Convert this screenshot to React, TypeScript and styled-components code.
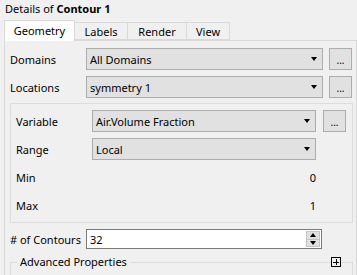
import React from "react";
import styled, { createGlobalStyle } from "styled-components";

const Global = createGlobalStyle`
  html, body { margin: 0; padding: 0; background: #f0f0f0; }
  body {
    font-family: "Noto Sans", "Liberation Sans", sans-serif;
    font-size: 11px;
    color: #000;
  }
  * { box-sizing: border-box; }
`;

const Page = styled.div`
  width: 357px;
  height: 275px;
  overflow: hidden;
  display: flex;
  flex-direction: column;
  & > * { flex-shrink: 0; }
`;

const Title = styled.div`
  height: 20px;
  padding-left: 5px;
  padding-bottom: 4px;
  display: flex;
  align-items: center;
  b { font-weight: 700; }
`;

const TabBar = styled.div`
  display: flex;
  align-items: flex-end;
  height: 20px;
  margin-left: 4px;
  position: relative;
  z-index: 1;
`;

const Tab = styled.div<{ $active?: boolean; $w: number }>`
  width: ${(p) => p.$w}px;
  height: ${(p) => (p.$active ? 21 : 18)}px;
  margin-bottom: ${(p) => (p.$active ? -1 : 0)}px;
  background: ${(p) => (p.$active ? "#ffffff" : "#f0f0f0")};
  border: 1px solid #d9d9d9;
  border-bottom: ${(p) => (p.$active ? "none" : "1px solid #d9d9d9")};
  border-left: ${(p) => (p.$active ? "1px solid #d9d9d9" : "none")};
  display: flex;
  align-items: center;
  justify-content: center;
  padding-bottom: ${(p) => (p.$active ? 1 : 0)}px;
`;

const Panel = styled.div`
  margin-left: 4px;
  width: 353px;
  flex: 1 1 0 !important;
  min-height: 0;
  overflow: hidden;
  border: 1px solid #d9d9d9;
  border-bottom: none;
  padding: 7px 3px 0 5px;
  display: flex;
  flex-direction: column;
  & > * { flex-shrink: 0; }
`;

const Row = styled.div<{ $mb?: number; $h?: number }>`
  display: flex;
  align-items: center;
  flex-shrink: 0;
  height: ${(p) => p.$h ?? 22}px;
  margin-bottom: ${(p) => p.$mb ?? 6}px;
`;

const Label = styled.div<{ $w?: number }>`
  width: ${(p) => p.$w ?? 76}px;
  flex-shrink: 0;
`;

const Select = styled.div<{ $w: number }>`
  width: ${(p) => p.$w}px;
  height: 22px;
  background: #e1e1e1;
  border: 1px solid #adadad;
  display: flex;
  align-items: center;
  justify-content: space-between;
  padding: 0 5px 0 3px;
  flex-shrink: 0;
`;

const Arrow = styled.span`
  width: 0;
  height: 0;
  border-left: 3.5px solid transparent;
  border-right: 3.5px solid transparent;
  border-top: 4px solid #000;
`;

const DotsButton = styled.div<{ $ml: number }>`
  width: 23px;
  height: 22px;
  margin-left: ${(p) => p.$ml}px;
  background: #e1e1e1;
  border: 1px solid #adadad;
  display: flex;
  align-items: flex-end;
  justify-content: center;
  padding-bottom: 4px;
  line-height: 1;
  font-size: 10px;
  flex-shrink: 0;
`;

const Group = styled.div`
  border: 1px solid #dcdcdc;
  height: 120px;
  width: 343px;
  padding: 6px 0 0 5px;
  display: flex;
  flex-direction: column;
  margin-bottom: 6px;
  & > * { flex-shrink: 0; }
`;

const Value = styled.div<{ $w: number }>`
  width: ${(p) => p.$w}px;
  text-align: right;
  padding-right: 0;
`;

const NumberInput = styled.div`
  width: 236px;
  height: 20px;
  background: #fff;
  border: 1px solid #7a7a7a;
  display: flex;
  align-items: center;
  justify-content: space-between;
  padding: 0 1px 0 3px;
`;

const Spinner = styled.div`
  display: flex;
  flex-direction: column;
  width: 14px;
  height: 16px;
`;

const SpinBtn = styled.div<{ $up?: boolean }>`
  flex: 1;
  background: #e1e1e1;
  border: 1px solid #c4c4c4;
  border-top: ${(p) => (p.$up ? "1px solid #c4c4c4" : "none")};
  display: flex;
  align-items: center;
  justify-content: center;
  &::after {
    content: "";
    width: 0;
    height: 0;
    border-left: 3.5px solid transparent;
    border-right: 3.5px solid transparent;
    ${(p) =>
      p.$up ? "border-bottom: 4px solid #000;" : "border-top: 4px solid #000;"}
  }
`;

const Fieldset = styled.fieldset`
  margin: 6px 0 0 0;
  width: 343px;
  border: 1px solid #dcdcdc;
  padding: 0;
  height: 30px;
  position: relative;
`;

const Legend = styled.legend`
  margin-left: 6px;
  padding: 0 3px;
  font-size: 11px;
  line-height: 14px;
`;

const PlusBox = styled.div`
  position: absolute;
  top: -12px;
  right: 11px;
  width: 10px;
  height: 10px;
  background: #f0f0f0;
  border: 1px solid #000;
  display: flex;
  align-items: center;
  justify-content: center;
`;

export default function App() {
  return (
    <Page>
      <Global />
      <Title>
        Details of&nbsp;<b>Contour 1</b>
      </Title>
      <TabBar>
        <Tab $active $w={71}>Geometry</Tab>
        <Tab $w={53}>Labels</Tab>
        <Tab $w={59}>Render</Tab>
        <Tab $w={43}>View</Tab>
      </TabBar>
      <Panel>
        <Row>
          <Label>Domains</Label>
          <Select $w={237}>
            All Domains
            <Arrow />
          </Select>
          <DotsButton $ml={6}>...</DotsButton>
        </Row>
        <Row $mb={5}>
          <Label>Locations</Label>
          <Select $w={237}>
            symmetry 1
            <Arrow />
          </Select>
          <DotsButton $ml={6}>...</DotsButton>
        </Row>
        <Group>
          <Row>
            <Label>Variable</Label>
            <Select $w={224}>
              Air.Volume Fraction
              <Arrow />
            </Select>
            <DotsButton $ml={7}>...</DotsButton>
          </Row>
          <Row>
            <Label>Range</Label>
            <Select $w={224}>
              Local
              <Arrow />
            </Select>
          </Row>
          <Row>
            <Label>Min</Label>
            <Value $w={224}>0</Value>
          </Row>
          <Row>
            <Label>Max</Label>
            <Value $w={224}>1</Value>
          </Row>
        </Group>
        <Row $mb={0} $h={20}>
          <Label># of Contours</Label>
          <NumberInput>
            32
            <Spinner>
              <SpinBtn $up />
              <SpinBtn />
            </Spinner>
          </NumberInput>
        </Row>
        <Fieldset>
          <Legend>Advanced Properties</Legend>
          <PlusBox>
            <svg width="8" height="8" viewBox="0 0 8 8">
              <path d="M4 1V7M1 4H7" stroke="#000" strokeWidth="1" shapeRendering="crispEdges" />
            </svg>
          </PlusBox>
        </Fieldset>
      </Panel>
    </Page>
  );
}
